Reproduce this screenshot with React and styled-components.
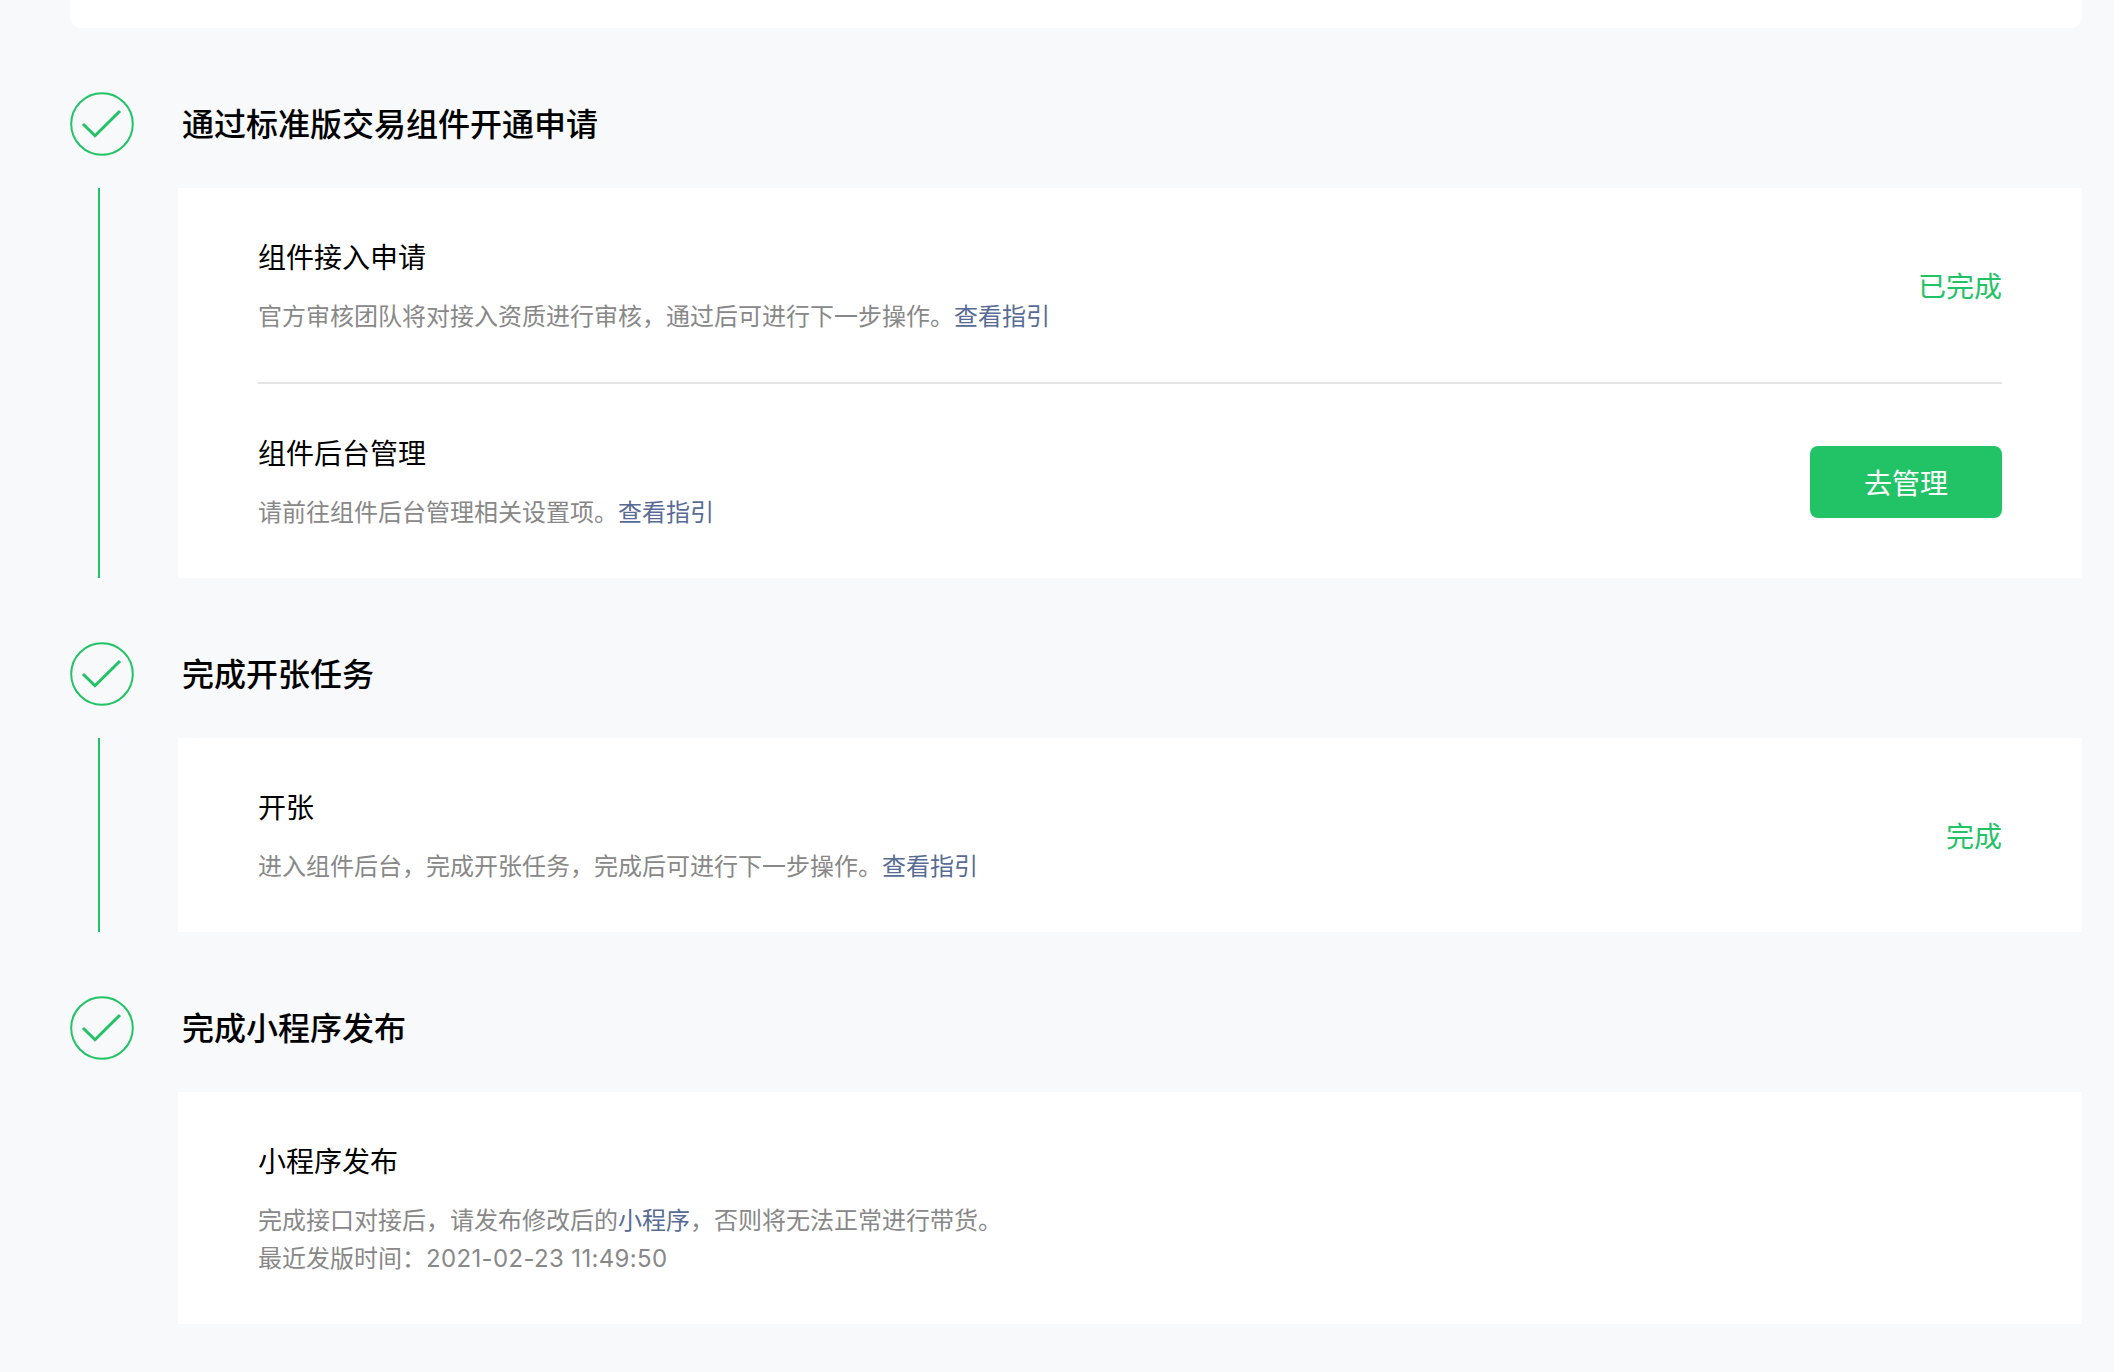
import styled, { createGlobalStyle } from "styled-components";

const GlobalStyle = createGlobalStyle`
  html, body {
    margin: 0;
    padding: 0;
    background: #f8f9fb;
  }
  body {
    font-family: Inter, "Noto Sans CJK SC", "Noto Sans", sans-serif;
    color: #000;
  }
`;

const Page = styled.div`
  width: 2114px;
  min-height: 1372px;
  box-sizing: border-box;
  padding: 0 32px 48px 70px;
  background: #f8f9fb;
`;

const TopCard = styled.div`
  height: 28px;
  background: #fff;
  border-radius: 0 0 12px 12px;
`;

const Step = styled.section`
  margin-top: 64px;
`;

const StepHeader = styled.div`
  display: flex;
  align-items: center;
  gap: 48px;
  height: 64px;
  margin-bottom: 32px;
`;

const StepTitle = styled.h2`
  margin: 0;
  padding-top: 2px;
  font-size: 32px;
  font-weight: 500;
  line-height: 44px;
`;

const StepBody = styled.div`
  display: flex;
  align-items: stretch;
`;

const Rail = styled.div`
  flex: none;
  width: 2px;
  margin: 0 78px 0 28px;
  background: ${(p) => (p.$hidden ? "transparent" : "#22c366")};
`;

const Card = styled.div`
  flex: 1;
  min-width: 0;
  padding: 0 80px;
  background: #fff;
`;

const Row = styled.div`
  display: flex;
  align-items: center;
  justify-content: space-between;
  padding: 50px 0 46px;
  border-top: ${(p) => (p.$divided ? "2px solid #e5e5e5" : "none")};
`;

const RowTitle = styled.h3`
  margin: 0 0 20px;
  font-size: 28px;
  font-weight: 400;
  line-height: 40px;
`;

const Description = styled.p`
  margin: 0;
  font-size: 24px;
  line-height: 38px;
  color: #888;
`;

const GuideLink = styled.a`
  color: #576b95;
  text-decoration: none;
`;

const Timestamp = styled.span`
  letter-spacing: 0.35px;
`;

const Status = styled.span`
  font-size: 28px;
  line-height: 40px;
  color: #22c366;
`;

const ManageButton = styled.button`
  width: 192px;
  height: 72px;
  margin-bottom: 2px;
  padding: 0;
  border: 0;
  border-radius: 8px;
  background: #22c366;
  color: #fff;
  font-family: inherit;
  font-size: 28px;
`;

const CheckIcon = () => (
  <svg width="64" height="64" viewBox="0 0 64 64" fill="none" stroke="#22c366">
    <circle cx="32" cy="32" r="30.8" strokeWidth="2" />
    <path d="M13 32 L25 43.7 L50 19" strokeWidth="3" />
  </svg>
);

const App = () => (
  <Page>
    <GlobalStyle />
    <TopCard />

    <Step>
      <StepHeader>
        <CheckIcon />
        <StepTitle>通过标准版交易组件开通申请</StepTitle>
      </StepHeader>
      <StepBody>
        <Rail />
        <Card>
          <Row>
            <div>
              <RowTitle>组件接入申请</RowTitle>
              <Description>
                官方审核团队将对接入资质进行审核，通过后可进行下一步操作。
                <GuideLink href="#">查看指引</GuideLink>
              </Description>
            </div>
            <Status>已完成</Status>
          </Row>
          <Row $divided>
            <div>
              <RowTitle>组件后台管理</RowTitle>
              <Description>
                请前往组件后台管理相关设置项。
                <GuideLink href="#">查看指引</GuideLink>
              </Description>
            </div>
            <ManageButton>去管理</ManageButton>
          </Row>
        </Card>
      </StepBody>
    </Step>

    <Step>
      <StepHeader>
        <CheckIcon />
        <StepTitle>完成开张任务</StepTitle>
      </StepHeader>
      <StepBody>
        <Rail />
        <Card>
          <Row>
            <div>
              <RowTitle>开张</RowTitle>
              <Description>
                进入组件后台，完成开张任务，完成后可进行下一步操作。
                <GuideLink href="#">查看指引</GuideLink>
              </Description>
            </div>
            <Status>完成</Status>
          </Row>
        </Card>
      </StepBody>
    </Step>

    <Step>
      <StepHeader>
        <CheckIcon />
        <StepTitle>完成小程序发布</StepTitle>
      </StepHeader>
      <StepBody>
        <Rail $hidden />
        <Card>
          <Row>
            <div>
              <RowTitle>小程序发布</RowTitle>
              <Description>
                完成接口对接后，请发布修改后的<GuideLink href="#">小程序</GuideLink>，否则将无法正常进行带货。
                <br />
                最近发版时间：<Timestamp>2021-02-23 11:49:50</Timestamp>
              </Description>
            </div>
          </Row>
        </Card>
      </StepBody>
    </Step>
  </Page>
);

export default App;
